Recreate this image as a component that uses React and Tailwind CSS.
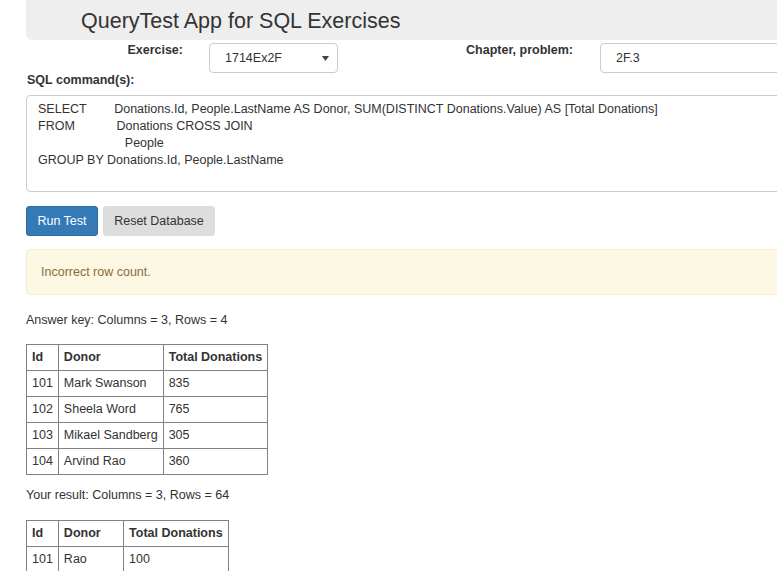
export default function App() {
  const ans = [
    ["101", "Mark Swanson", "835"],
    ["102", "Sheela Word", "765"],
    ["103", "Mikael Sandberg", "305"],
    ["104", "Arvind Rao", "360"],
  ];
  const res = [
    ["101", "Rao", "100"],
    ["101", "Sandberg", "100"],
    ["101", "Swanson", "100"],
    ["101", "Word", "100"],
  ];
  const sp = (n) => " ".repeat(n);
  const sql =
    "SELECT" + sp(8) + "Donations.Id, People.LastName AS Donor, SUM(DISTINCT Donations.Value) AS [Total Donations]\n" +
    "FROM" + sp(12) + "Donations CROSS JOIN\n" +
    sp(25) + "People\n" +
    "GROUP BY Donations.Id, People.LastName";

  const Table = ({ rows }) => (
    <table className="border-collapse">
      <thead>
        <tr>
          {["Id", "Donor", "Total Donations"].map((h) => (
            <th key={h} className="border border-[#808080] h-[26px] px-[5px] text-left font-bold">
              {h}
            </th>
          ))}
        </tr>
      </thead>
      <tbody>
        {rows.map((r, i) => (
          <tr key={i}>
            {r.map((c, j) => (
              <td key={j} className="border border-[#808080] h-[26px] px-[5px] text-left">
                {c}
              </td>
            ))}
          </tr>
        ))}
      </tbody>
    </table>
  );

  return (
    <div
      className="w-[777px] h-[571px] overflow-hidden bg-white text-[#333] text-[12.5px] leading-[17px]"
      style={{ fontFamily: '"Liberation Sans", Arial, sans-serif' }}
    >
      <div className="w-[1000px]">
        {/* Header */}
        <div className="ml-[26px] h-[40px] bg-[#eeeeee] rounded-bl-[6px] pl-[55px] pt-[7px]">
          <div className="text-[21.5px] leading-[28px] text-[#333]">QueryTest App for SQL Exercises</div>
        </div>

        {/* Exercise row */}
        <div className="flex items-start mt-[3px] h-[30px]">
          <div className="w-[183px] text-right font-bold -mt-[1px]">Exercise:</div>
          <div className="ml-[26px] w-[129px] h-[30px] border border-[#cccccc] rounded-[4px] flex items-center pl-[15px] pr-[8px] justify-between">
            <span>1714Ex2F</span>
            <svg width="7" height="5" viewBox="0 0 7 5">
              <path d="M0 0 L7 0 L3.5 5 Z" fill="#444" />
            </svg>
          </div>
          <div className="w-[235px] text-right font-bold -mt-[1px]">Chapter, problem:</div>
          <div className="ml-[27px] w-[400px] h-[30px] border border-[#cccccc] rounded-[4px] flex items-center pl-[15px]">
            2F.3
          </div>
        </div>

        <div className="ml-[27px] mt-[-1px] font-bold">SQL command(s):</div>

        <div className="ml-[26px] mt-[6px] w-[900px] h-[97px] border border-[#cccccc] rounded-[4px] pt-[5px] pl-[11px] whitespace-pre">
          {sql}
        </div>

        {/* Buttons */}
        <div className="ml-[26px] mt-[14px] flex gap-[5px]">
          <div className="w-[72px] h-[30px] rounded-[3px] bg-[#337ab7] border border-[#2e6da4] text-white flex items-center justify-center">
            Run Test
          </div>
          <div className="w-[112px] h-[30px] rounded-[3px] bg-[#dddddd] border border-[#dddddd] text-[#333] flex items-center justify-center">
            Reset Database
          </div>
        </div>

        {/* Alert */}
        <div className="ml-[26px] mt-[13px] w-[900px] h-[46px] rounded-[4px] bg-[#fcf8e3] border border-[#faebcc] text-[#8a6d3b] pl-[14px] flex items-center">
          Incorrect row count.
        </div>

        <div className="ml-[26px] mt-[17px]">Answer key: Columns = 3, Rows = 4</div>
        <div className="ml-[26px] mt-[15px]">
          <Table rows={ans} />
        </div>
        <div className="ml-[26px] mt-[12px]">Your result: Columns = 3, Rows = 64</div>
        <div className="ml-[26px] mt-[16px]">
          <Table rows={res} />
        </div>
      </div>
    </div>
  );
}
